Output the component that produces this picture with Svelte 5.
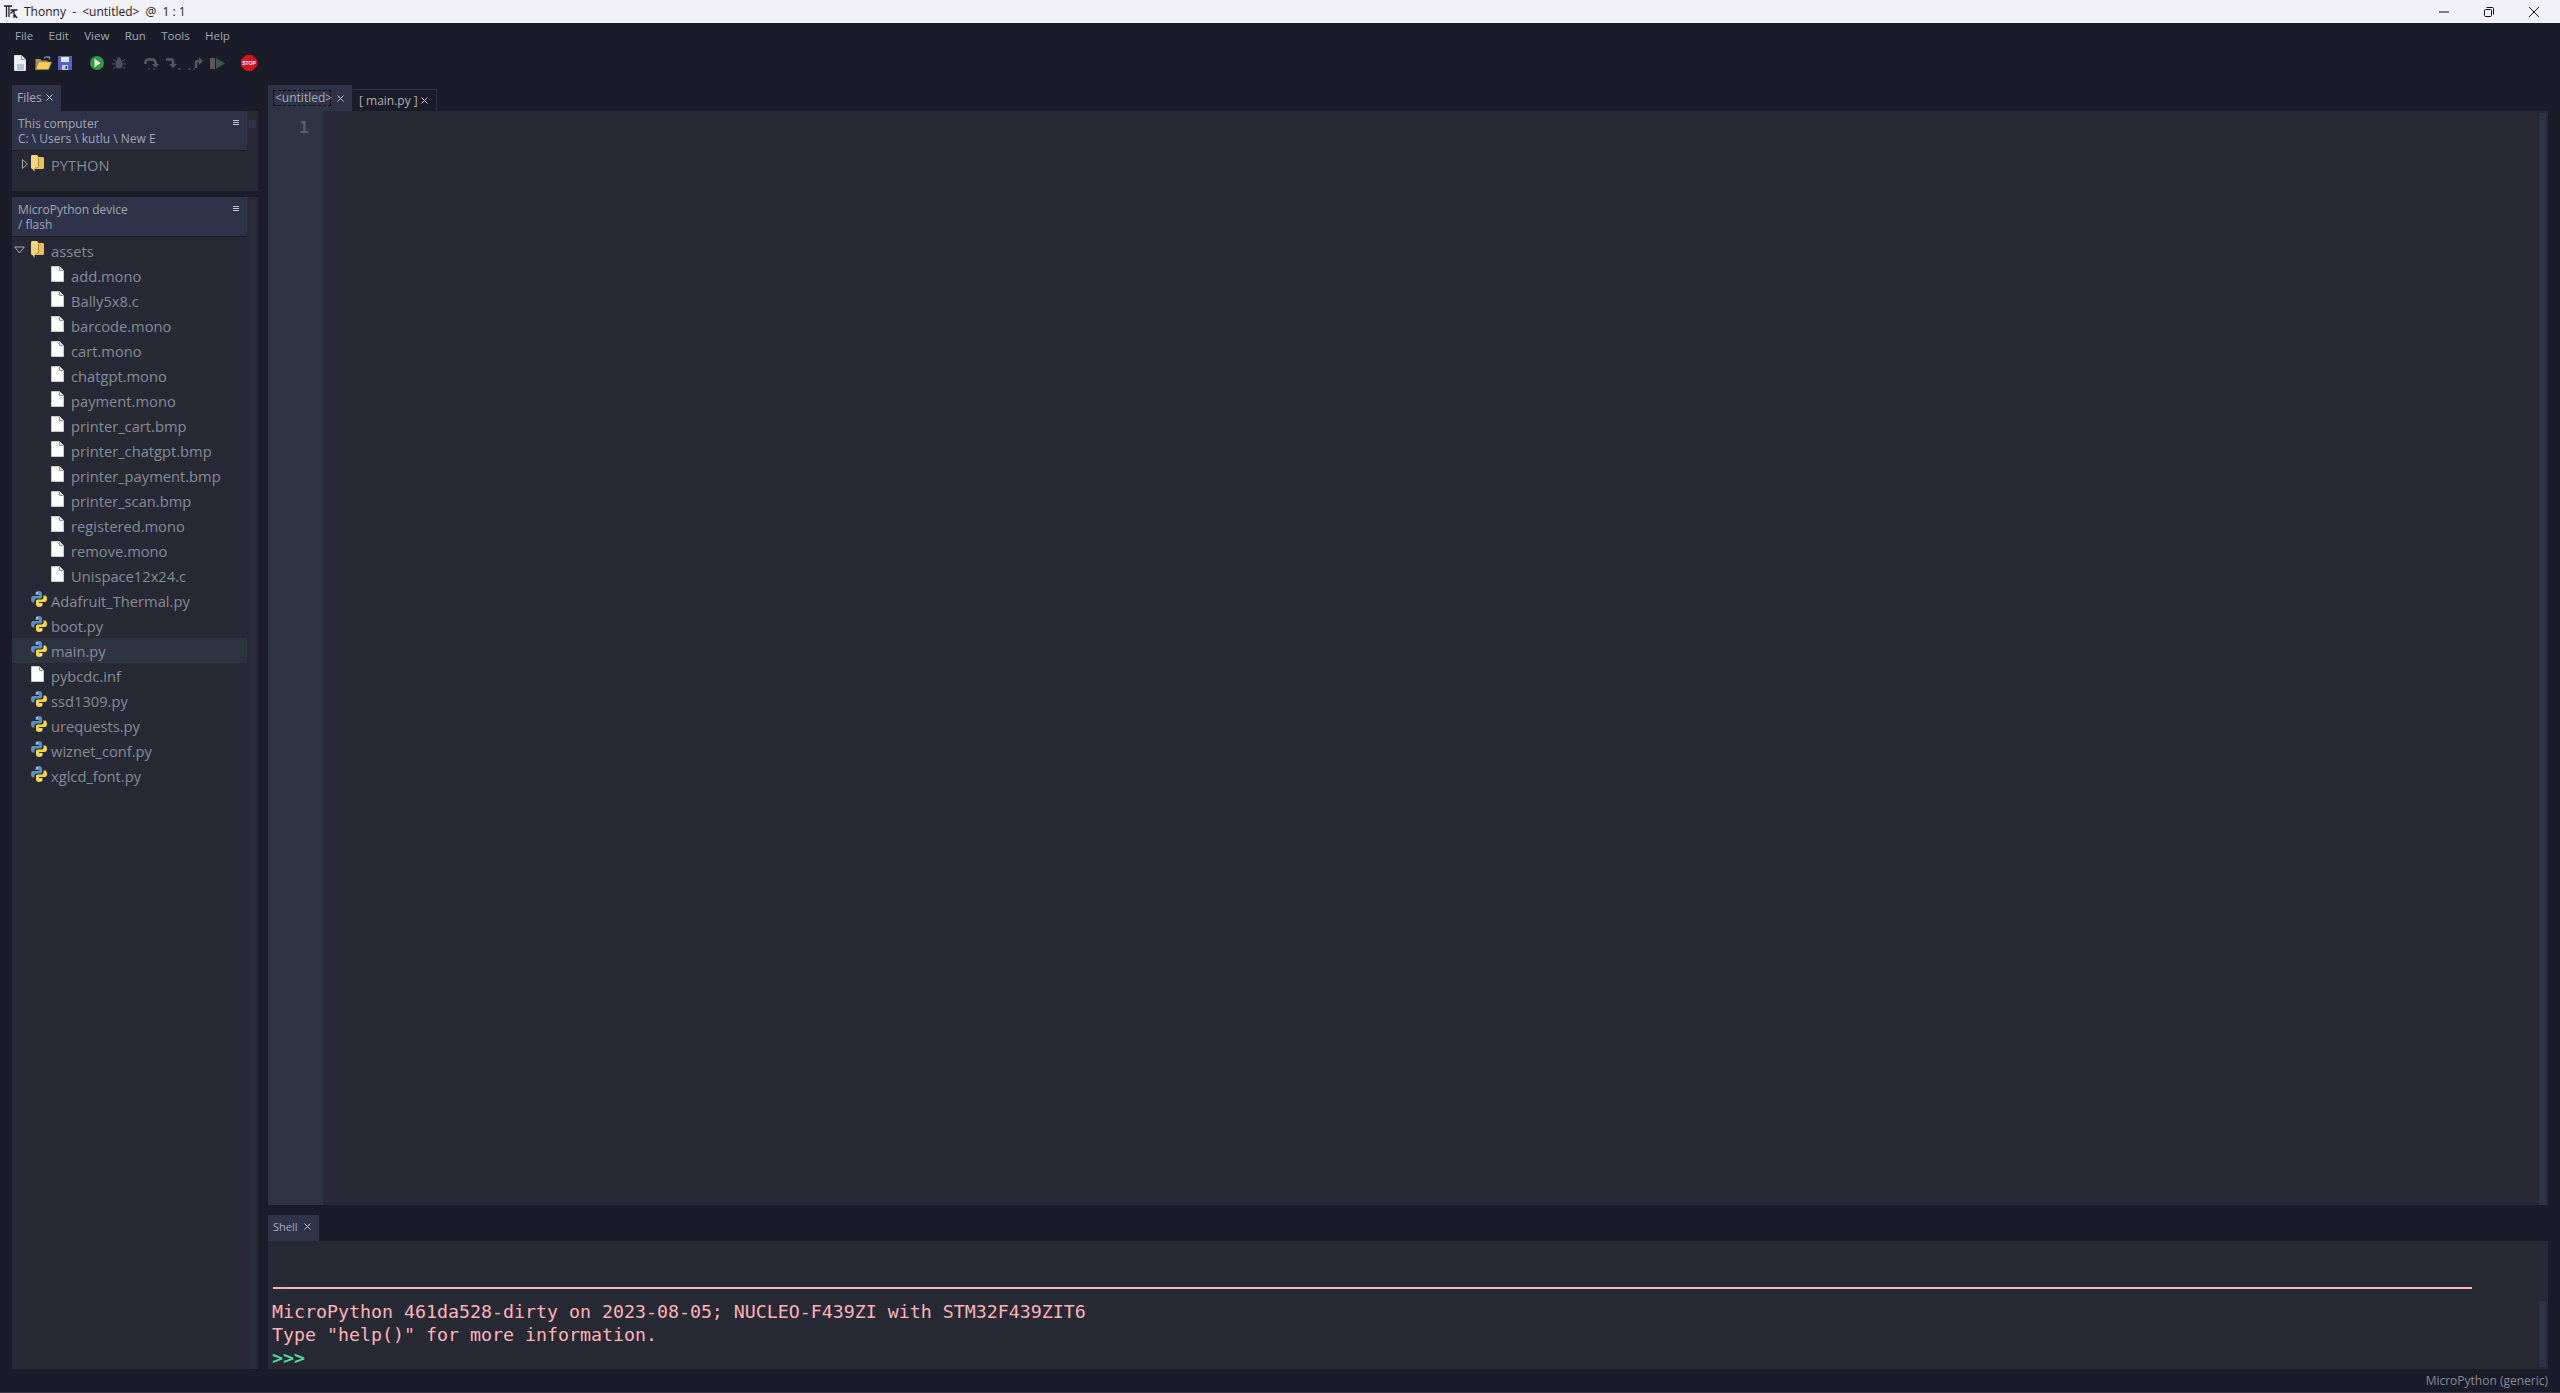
<script>
  const assets = ['add.mono','Bally5x8.c','barcode.mono','cart.mono','chatgpt.mono','payment.mono','printer_cart.bmp','printer_chatgpt.bmp','printer_payment.bmp','printer_scan.bmp','registered.mono','remove.mono','Unispace12x24.c'];
  const rootFiles = [
    {n:'Adafruit_Thermal.py',py:true},{n:'boot.py',py:true},{n:'main.py',py:true,sel:true},{n:'pybcdc.inf',py:false},
    {n:'ssd1309.py',py:true},{n:'urequests.py',py:true},{n:'wiznet_conf.py',py:true},{n:'xglcd_font.py',py:true}
  ];
</script>

{#snippet folder()}
  <svg class="ico" width="13" height="17" viewBox="0 0 13 17"><path d="M0 1l1-1h5l1 1v13H4l-.5 0 0 3L1.500 14H1l-1-1z" fill="#f5d67e"/><path d="M7 2h5l1 1v10l-1 1H7z" fill="#e8c25f"/><path d="M7.500 3v8.500L6 13H4" fill="none" stroke="#a5863a"/></svg>
{/snippet}
{#snippet doc()}
  <svg class="ico" width="13" height="16" viewBox="0 0 13 16"><path d="M.5.5h8l4 4v11H.5z" fill="#fff" stroke="#c9c9c9"/><path d="M8.500.5v4h4" fill="#ddd" stroke="#999"/></svg>
{/snippet}
{#snippet py()}
  <svg class="ico" width="16" height="16" viewBox="0 0 16 16"><path d="M8 0C5 0 4.500 1 4.500 2.500V4H8v1H2C.5 5 0 6.500 0 8s.5 3.500 2 3.500h1.500V9.500C3.500 8.300 4.500 7.500 5.500 7.500h4c1 0 1.500-.8 1.500-1.500V2.500C11 1 10 0 8 0z" fill="#5c8fc4"/><path d="M8 16c3 0 3.500-1 3.500-2.500V12H8v-1h6c1.500 0 2-1.500 2-3s-.5-3.500-2-3.500h-1.500v2c0 1.200-1 2-2 2h-4C5.500 8.500 5 9.300 5 10v3.500C5 15 6 16 8 16z" fill="#f7d53d"/><circle cx="6.200" cy="2" r=".8" fill="#fff"/><circle cx="9.800" cy="14" r=".8" fill="#fff"/></svg>
{/snippet}
{#snippet close()}
  <svg class="x" width="7" height="7" viewBox="0 0 7 7"><path d="M.5.5l6 6M6.500.5l-6 6" stroke="#c4c7d0" stroke-width="1" fill="none"/></svg>
{/snippet}

<div class="app">
  <header class="title">
    <svg width="14" height="14" viewBox="0 0 14 14"><path d="M0 1h8M2.500 1v11M5 1v11M6.500 5h7M10 5v8M6.500 8.500l3-3M13 13l-3-4" fill="none" stroke="#222" stroke-width="1.300"/></svg>
    <span class="ttext">Thonny &nbsp;-&nbsp; &lt;untitled&gt; &nbsp;@&nbsp; 1 : 1</span>
    <span class="grow"></span>
    <div class="win">
      <svg width="12" height="12" viewBox="0 0 12 12"><path d="M1 6h10" stroke="#111" fill="none"/></svg>
      <svg width="12" height="12" viewBox="0 0 12 12"><rect x="1.500" y="3.500" width="7" height="7" rx="1" fill="none" stroke="#111"/><path d="M3.500 1.500h6a1 1 0 0 1 1 1v6" fill="none" stroke="#111"/></svg>
      <svg width="12" height="12" viewBox="0 0 12 12"><path d="M1 1l10 10M11 1L1 11" stroke="#111" fill="none"/></svg>
    </div>
  </header>

  <nav class="menu">
    <span>File</span><span>Edit</span><span>View</span><span>Run</span><span>Tools</span><span>Help</span>
  </nav>

  <div class="toolbar">
    <svg class="t" style="margin-left:14px" width="12" height="16" viewBox="0 0 12 16"><path d="M.5.500h7l4 4v11H.5z" fill="#eef2f8" stroke="#dfe3ea"/><path d="M3 9h7v6H3z" fill="#b9c6da"/><path d="M7.500.5v4h4" fill="#fff" stroke="#8a97ad"/></svg>
    <svg class="t" style="margin-left:9px" width="17" height="14" viewBox="0 0 17 14"><path d="M.5 3h5l1 1.500h6V6H3L.5 13.500z" fill="#a8946a"/><path d="M3.500 6h13l-3 7.500H.5z" fill="#f4c95d" stroke="#b08c38" stroke-width=".6"/><path d="M9 2.500c1-2 3-2 5-1M14.500 3.500V1l-2.500.3" fill="none" stroke="#7d94b4" stroke-width="1.200"/></svg>
    <svg class="t" style="margin-left:6px" width="14" height="14" viewBox="0 0 14 14"><path d="M0 0h14v14H0z" fill="#5a5fcf"/><path d="M3 1h8v5H3z" fill="#e6e8f6"/><path d="M4 9h6v5H4z" fill="#c9ccd6"/><path d="M7.500 10h1.500v3H7.500z" fill="#34386f"/></svg>
    <svg class="t" style="margin-left:18px" width="14" height="14" viewBox="0 0 14 14"><circle cx="7" cy="7" r="7" fill="#2c9a3d"/><path d="M4.500 2.500l6 4.500-6 4.500z" fill="#f2f6ee"/></svg>
    <svg class="t" style="margin-left:8px" width="14" height="14" viewBox="0 0 14 14"><ellipse cx="7" cy="8" rx="3.500" ry="4.500" fill="#4a535c"/><circle cx="7" cy="3" r="1.800" fill="#4a535c"/><path d="M1 3l3 2.500M13 3l-3 2.500M0 8h3.500M14 8h-3.500M1 13l3-2.500M13 13l-3-2.500" stroke="#4a535c" fill="none"/></svg>
    <svg class="t" style="margin-left:18px" width="15" height="13" viewBox="0 0 15 13"><path d="M1.500 7V5.500a3 3 0 0 1 3-3h4a3 3 0 0 1 3 3V8" fill="none" stroke="#565a5c" stroke-width="2.400"/><path d="M8 7h7l-3.500 3.500z" fill="#565a5c"/><path d="M4 12h2M9 12h2" stroke="#565a5c" stroke-width="1.200"/></svg>
    <svg class="t" style="margin-left:7px" width="15" height="13" viewBox="0 0 15 13"><path d="M0 2.500h5.500a1.500 1.500 0 0 1 1.500 1.500v4" fill="none" stroke="#565a5c" stroke-width="2.400"/><path d="M3 7h8l-4 4z" fill="#565a5c"/><path d="M12 12h3" stroke="#565a5c" stroke-width="1.200"/></svg>
    <svg class="t" style="margin-left:7px" width="15" height="13" viewBox="0 0 15 13"><path d="M8 11V5.500A1.500 1.500 0 0 1 9.500 4H11" fill="none" stroke="#565a5c" stroke-width="2.400"/><path d="M11 0v8l4-4z" fill="#565a5c"/><path d="M0 12h3M5 12h2" stroke="#565a5c" stroke-width="1.200"/></svg>
    <svg class="t" style="margin-left:7px" width="15" height="13" viewBox="0 0 15 13"><path d="M0 1h5v11H0z" fill="#575a57"/><path d="M6 1l9 5.500L6 12z" fill="#3d5454"/></svg>
    <svg class="t" style="margin-left:16px" width="16" height="16" viewBox="0 0 16 16"><path d="M5 0h6l5 5v6l-5 5H5l-5-5V5z" fill="#d8141c"/><text x="8" y="10.400" text-anchor="middle" class="stop">STOP</text></svg>
  </div>

  <div class="main">
    <aside class="left">
      <div class="tabrow"><div class="tab active files">Files {@render close()}</div></div>

      <section class="pane upper">
        <div class="phead">
          <div class="ptxt"><div>This computer</div><div>C: \ Users \ kutlu \ New E</div></div>
          <div class="burger"><i></i><i></i><i></i></div>
        </div>
        <div class="sb"><span class="sbthumb top"></span></div>
        <div class="tree">
          <div class="row"><svg class="tri" width="8" height="12" viewBox="0 0 8 12"><path d="M1.500 1.500l5 4.500-5 4.500z" fill="none" stroke="#a9adb8"/></svg>{@render folder()}<span class="fname">PYTHON</span></div>
        </div>
      </section>

      <section class="pane lower">
        <div class="phead">
          <div class="ptxt"><div>MicroPython device</div><div>/ flash</div></div>
          <div class="burger"><i></i><i></i><i></i></div>
        </div>
        <div class="sb"></div>
        <div class="tree">
          <div class="row"><svg class="tri open" width="11" height="8" viewBox="0 0 11 8"><path d="M.8 1h9.400L5.500 7z" fill="none" stroke="#a9adb8"/></svg>{@render folder()}<span class="fname">assets</span></div>
          {#each assets as a}
            <div class="row child">{@render doc()}<span>{a}</span></div>
          {/each}
          {#each rootFiles as f}
            <div class="row rootfile" class:sel={f.sel}>{#if f.py}{@render py()}<span class="pyname">{f.n}</span>{:else}{@render doc()}<span>{f.n}</span>{/if}</div>
          {/each}
        </div>
      </section>
    </aside>

    <div class="right">
      <div class="etabs">
        <div class="tab active untitled"><span class="focus">&lt;untitled&gt;</span>{@render close()}</div>
        <div class="tab inactive">[ main.py ] {@render close()}</div>
      </div>
      <div class="editor">
        <div class="gutter">1</div>
        <div class="code"></div>
        <div class="esb"></div>
      </div>
      <div class="shelltabs"><div class="tab active shelltab">Shell {@render close()}</div></div>
      <div class="shell">
        <div class="rule"></div>
        <div class="out">MicroPython 461da528-dirty on 2023-08-05; NUCLEO-F439ZI with STM32F439ZIT6</div>
        <div class="out">Type "help()" for more information.</div>
        <div class="prompt">&gt;&gt;&gt;</div>
        <div class="ssb"></div>
      </div>
    </div>
  </div>

  <footer class="status">MicroPython (generic)</footer>
</div>

<style>
  :global(body) { margin: 0; background: #1a1c29; }
  .app { width: 2560px; height: 1393px; display: flex; flex-direction: column; background: #1a1c29; overflow: hidden; font-family: "Open Sans", "Noto Sans", sans-serif; color: #a9adb8; }
  .title { height: 23px; flex: none; background: #f2f0f8; display: flex; align-items: center; padding-left: 4px; color: #222; box-sizing: border-box; }
  .ttext { margin-left: 6px; font-size: 12px; }
  .grow { flex: 1; }
  .win { display: flex; gap: 33px; margin-right: 20px; align-items: center; }
  .menu { height: 24px; flex: none; display: flex; align-items: center; font-size: 11.500px; color: #a4a8b2; padding-left: 15px; gap: 15.300px; }
  .toolbar { height: 38px; flex: none; display: flex; align-items: center; padding-bottom: 6px; box-sizing: border-box; }
  .t { flex: none; display: block; }
  .stop { font: bold 5px "Liberation Sans", sans-serif; fill: #fff; }
  .main { flex: 1; min-height: 0; display: flex; }
  .left { width: 246px; margin-left: 12px; flex: none; display: flex; flex-direction: column; }
  .tabrow { height: 26px; flex: none; display: flex; }
  .tab { background: #2e3349; display: flex; align-items: center; font-size: 12px; color: #a9adb8; box-sizing: border-box; }
  .files { width: 49px; padding: 0 0 2px 5px; gap: 4px; height: 26px; }
  .pane { position: relative; background: #272935; }
  .upper { height: 80px; flex: none; margin-bottom: 6px; }
  .lower { flex: 1; min-height: 0; }
  .phead { width: 235px; height: 40px; background: #2e3349; border-bottom: 1px solid #1a1c29; box-sizing: border-box; display: flex; padding: 5px 6px 0 6px; justify-content: space-between; }
  .ptxt { font-size: 12px; line-height: 15px; color: #a4a8b2; white-space: nowrap; }
  .burger { display: flex; flex-direction: column; gap: 1px; padding-top: 4px; margin-right: 2px; }
  .burger i { display: block; width: 6px; height: 1px; background: #c4c7d0; }
  .sb { position: absolute; right: 2px; top: 0; bottom: 0; width: 7px; background: #272935; }
  .lower .sb { background: #2a2d3b; top: 2px; }
  .sbthumb { display: block; width: 7px; height: 8px; background: #2e3349; margin-top: 9px; }
  .tree { width: 235px; padding-top: 1px; }
  .row { height: 25px; display: flex; align-items: center; position: relative; padding-left: 19px; box-sizing: border-box; font-size: 14.700px; color: #868c99; white-space: nowrap; }
  .row span { margin-left: 7px; }
  .row .pyname { margin-left: 4px; }
  .row .fname { margin-left: 7px; }
  .tri { position: absolute; left: 9px; top: 6px; }
  .tri.open { left: 2px; top: 8px; }
  .ico { flex: none; margin-top: -3px; }
  .child { padding-left: 39px; }
  .sel { background: #2e343f; }
  .right { flex: 1; margin-left: 10px; margin-right: 12px; min-width: 0; display: flex; flex-direction: column; }
  .etabs { height: 26px; flex: none; display: flex; align-items: flex-end; }
  .untitled { width: 84px; height: 26px; padding-left: 5px; gap: 6px; }
  .focus { outline: 1px dashed #0b0b12; outline-offset: -1px; padding: 0 2px; height: 16px; line-height: 16px; width: 58px; box-sizing: border-box; white-space: nowrap; font-size: 12px; }
  .inactive { margin-left: 1px; width: 84px; height: 22px; background: #1a1c29; border-top: 1px solid #2e3349; border-right: 1px solid #2e3349; padding-left: 6px; gap: 3px; }
  .editor { height: 1094px; flex: none; display: flex; background: #272935; position: relative; }
  .gutter { width: 55px; background: #2e3440; text-align: right; padding: 8px 14px 0 0; box-sizing: border-box; font: bold 16.500px/18px "DejaVu Sans Mono", monospace; color: #5a5f68; }
  .code { flex: 1; }
  .esb { position: absolute; right: 2px; top: 2px; bottom: 0; width: 7px; background: #2e3349; }
  .shelltabs { height: 36px; flex: none; display: flex; align-items: flex-end; }
  .shelltab { width: 51px; height: 26px; padding: 0 0 3px 5px; gap: 6px; font-size: 11px; }
  .shell { flex: 1; min-height: 0; background: #272935; position: relative; padding-left: 4px; }
  .rule { position: absolute; left: 5px; top: 46px; height: 1.500px; width: 2199px; background: #ffb3b8; }
  .out { font: 18.270px/23px "DejaVu Sans Mono", monospace; color: #ffb3b8; white-space: pre; }
  .shell .out:nth-child(2) { margin-top: 59px; }
  .prompt { font: bold 18.270px/23px "DejaVu Sans Mono", monospace; color: #4fdca0; }
  .ssb { position: absolute; right: 2px; top: 60px; bottom: 2px; width: 7px; background: #2e3349; }
  .status { height: 24px; flex: none; text-align: right; padding-right: 12px; font-size: 12px; line-height: 24px; color: #868c99; border-bottom: 1px solid #3a3540; box-sizing: border-box; }
</style>
